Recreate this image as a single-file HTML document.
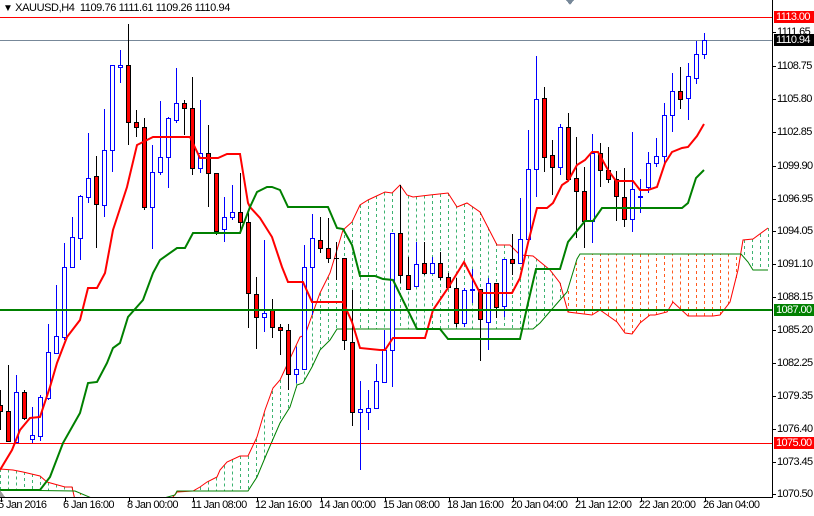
<!DOCTYPE html>
<html><head><meta charset="utf-8"><style>
html,body{margin:0;padding:0;background:#fff;}
#w{position:relative;width:814px;height:516px;overflow:hidden;background:#fff;font-family:"Liberation Sans",sans-serif;font-size:11px;color:#000;letter-spacing:-0.6px;}
.yl{position:absolute;left:777px;font-size:11px;line-height:12px;}
.xl{position:absolute;top:499px;font-size:11px;line-height:12px;white-space:nowrap;}
.tag{position:absolute;left:774px;width:40px;height:12px;line-height:12px;color:#fff;font-size:11px;padding-left:2px;box-sizing:border-box;}
</style></head><body><div id="w">
<svg id="s" width="814" height="516" style="position:absolute;left:0;top:0" shape-rendering="crispEdges"></svg>
<div style="position:absolute;left:3px;top:2px;white-space:nowrap;font-size:11px;letter-spacing:-0.4px"><span style="font-size:10px;">▼</span> XAUUSD,H4&nbsp; 1109.76 1111.61 1109.26 1110.94</div>
<div class="yl" style="top:26px">1111.65</div>
<div class="yl" style="top:60px">1108.75</div>
<div class="yl" style="top:93px">1105.80</div>
<div class="yl" style="top:126px">1102.85</div>
<div class="yl" style="top:160px">1099.90</div>
<div class="yl" style="top:193px">1096.95</div>
<div class="yl" style="top:225px">1094.05</div>
<div class="yl" style="top:258px">1091.10</div>
<div class="yl" style="top:291px">1088.15</div>
<div class="yl" style="top:324px">1085.20</div>
<div class="yl" style="top:357px">1082.25</div>
<div class="yl" style="top:390px">1079.35</div>
<div class="yl" style="top:423px">1076.40</div>
<div class="yl" style="top:456px">1073.45</div>
<div class="yl" style="top:488px">1070.50</div>
<div class="tag" style="top:11px;background:#f00">1113.00</div>
<div class="tag" style="top:34px;background:#000">1110.94</div>
<div class="tag" style="top:304px;background:#008000">1087.00</div>
<div class="tag" style="top:437px;background:#f00">1075.00</div>
<div class="xl" style="left:-2px">5 Jan 2016</div>
<div class="xl" style="left:63px">6 Jan 16:00</div>
<div class="xl" style="left:127px">8 Jan 00:00</div>
<div class="xl" style="left:191px">11 Jan 08:00</div>
<div class="xl" style="left:255px">12 Jan 16:00</div>
<div class="xl" style="left:319px">14 Jan 00:00</div>
<div class="xl" style="left:383px">15 Jan 08:00</div>
<div class="xl" style="left:447px">18 Jan 16:00</div>
<div class="xl" style="left:511px">20 Jan 04:00</div>
<div class="xl" style="left:575px">21 Jan 12:00</div>
<div class="xl" style="left:639px">22 Jan 20:00</div>
<div class="xl" style="left:703px">26 Jan 04:00</div>
</div>
<script>
var NS="http://www.w3.org/2000/svg",s=document.getElementById('s'),h='';
var A=[[0,469],[13,470],[23,472],[40,476],[47,482],[65,487],[72,487],[75,500],[170,520],[173,497],[177,492],[193,491],[200,487],[207,482],[217,477],[220,470],[227,462],[240,456],[248,456],[257,437],[265,410],[273,388],[280,380],[300,337],[305,335],[320,293],[330,273],[343,230],[352,222],[360,205],[368,200],[385,192],[392,193],[400,185],[407,195],[413,197],[430,195],[448,193],[457,207],[467,203],[480,212],[497,245],[510,245],[520,255],[533,256],[550,270],[560,283],[568,312],[592,315],[600,310],[610,317],[617,322],[625,333],[632,334],[640,323],[650,315],[655,315],[667,312],[673,302],[688,316],[713,316],[720,315],[730,302],[738,270],[743,240],[753,239],[768,228]];
var B=[[0,490],[75,491],[120,510],[175,495],[177,491],[248,491],[257,477],[267,453],[280,423],[290,407],[297,385],[303,383],[312,367],[320,350],[330,340],[337,329],[533,329],[540,323],[553,308],[567,292],[577,259],[580,254],[741,254],[748,262],[753,270],[768,270]];
function f(P,x){for(var i=0;i<P.length-1;i++){if(x>=P[i][0]&&x<=P[i+1][0]){var t=(x-P[i][0])/((P[i+1][0]-P[i][0])||1);return P[i][1]+t*(P[i+1][1]-P[i][1]);}}return null;}
function pl(P){return P.map(function(p){return p[0]+','+p[1]}).join(' ');}
h+='<g clip-path="url(#c)">';
for(var x=0;x<=768;x+=8){var a=f(A,x),b=f(B,x);if(a==null||b==null)continue;var c=a<b?'#3cb371':'#ff5a1f';h+='<line x1="'+(x+.5)+'" x2="'+(x+.5)+'" y1="'+a+'" y2="'+b+'" stroke="'+c+'" stroke-dasharray="3,3"/>';}
h+='<polyline points="'+pl(A)+'" fill="none" stroke="#f00" stroke-width="1" shape-rendering="auto"/>';
h+='<polyline points="'+pl(B)+'" fill="none" stroke="#008000" stroke-width="1" shape-rendering="auto"/>';
h+='</g>';
h+='<line x1="0" x2="772" y1="17.5" y2="17.5" stroke="#f00"/><line x1="0" x2="772" y1="443.5" y2="443.5" stroke="#f00"/><line x1="0" x2="772" y1="40.5" y2="40.5" stroke="#778899"/>';
var T=[[0,470],[12,450],[20,430],[30,418],[40,417],[50,387],[57,363],[67,337],[80,320],[88,288],[97,288],[105,273],[113,230],[127,187],[137,145],[153,137],[190,137],[200,158],[218,158],[227,154],[240,154],[248,203],[250,207],[260,218],[272,237],[282,267],[288,282],[303,282],[312,302],[343,302],[352,322],[360,348],[380,350],[385,350],[393,338],[425,338],[433,310],[448,288],[464,262],[480,293],[512,293],[520,278],[528,243],[537,208],[547,208],[553,203],[562,185],[568,181],[577,165],[585,160],[592,152],[598,152],[608,170],[616,181],[633,181],[640,190],[648,190],[657,187],[665,163],[672,152],[682,148],[688,147],[697,136],[704,124]];
var K=[[0,490],[40,490],[50,477],[63,443],[80,413],[88,383],[97,382],[107,363],[113,348],[120,343],[128,317],[143,300],[153,273],[160,260],[177,248],[185,248],[193,233],[240,233],[250,207],[257,192],[267,187],[272,187],[280,190],[288,207],[328,207],[337,228],[343,229],[352,245],[360,276],[375,276],[383,279],[393,280],[417,329],[440,329],[448,339],[520,339],[528,303],[536,269],[560,269],[568,242],[585,221],[593,221],[602,208],[682,208],[688,203],[696,178],[704,170]];
var C=[[0,'r',405,411,390,430],[1,'r',411,441,365,442],[2,'b',392,442,375,442],[3,'r',392,418,390,420],[4,'b',435,439,407,443],[5,'b',397,436,395,441],[6,'b',352,398,324,400],[7,'b',336,353,285,353],[8,'b',267,337,243,340],[9,'b',237,267,217,268],[10,'b',196,238,195,260],[11,'b',178,197,133,203],[12,'r',176,204,156,248],[13,'b',150,205,109,217],[14,'b',65,150,65,172],[15,'b',65,67,50,83],[16,'r',65,122,24,145],[17,'r',122,127,110,137],[18,'r',127,207,118,210],[19,'b',172,207,145,249],[20,'b',157,172,101,175],[21,'b',118,157,117,188],[22,'b',103,120,68,123],[23,'r',103,108,100,135],[24,'r',108,168,77,175],[25,'b',153,168,100,173],[26,'r',153,173,125,207],[27,'r',173,231,173,235],[28,'b',217,229,197,242],[29,'b',212,217,185,220],[30,'r',212,222,173,233],[31,'r',222,293,213,328],[32,'r',294,317,277,349],[33,'b',313,317,240,332],[34,'r',310,327,299,338],[35,'r',327,330,324,355],[36,'r',330,374,324,390],[37,'b',369,374,347,383],[38,'b',267,369,245,370],[39,'b',238,267,214,315],[40,'r',240,248,217,253],[41,'r',248,258,218,263],[42,'x',258,258,242,280],[43,'r',258,340,258,350],[44,'r',342,412,290,426],[45,'b',409,412,381,470],[46,'b',408,412,390,430],[47,'b',381,408,364,408],[48,'b',350,382,330,382],[49,'b',233,350,233,387],[50,'r',233,275,185,283],[51,'r',275,289,257,290],[52,'b',264,286,242,287],[53,'r',263,273,242,275],[54,'b',263,273,257,274],[55,'r',263,277,252,280],[56,'r',277,287,273,288],[57,'r',288,323,278,327],[58,'b',290,323,288,327],[59,'b',289,290,269,303],[60,'r',289,319,289,361],[61,'b',283,322,278,350],[62,'r',283,307,283,318],[63,'b',259,306,259,317],[64,'r',259,263,234,275],[65,'b',239,263,198,263],[66,'b',169,239,130,243],[67,'b',99,169,56,197],[68,'r',98,157,87,172],[69,'r',155,167,140,195],[70,'b',127,167,124,175],[71,'r',127,179,113,179],[72,'r',178,191,137,238],[73,'r',191,221,167,248],[74,'b',153,221,134,243],[75,'r',153,170,143,187],[76,'r',170,179,147,183],[77,'r',179,196,171,221],[78,'r',197,219,168,227],[79,'b',189,219,132,232],[80,'b',196,197,179,213],[81,'b',163,187,152,193],[82,'b',156,163,138,167],[83,'b',115,156,103,163],[84,'b',91,115,73,132],[85,'r',91,99,67,109],[86,'b',76,98,63,120],[87,'b',54,78,41,84],[88,'b',40,54,33,59]];
C.forEach(function(c){var x=c[0]*8,col=c[1]=='b'?'#00f':'#000';
h+='<line x1="'+(x+.5)+'" x2="'+(x+.5)+'" y1="'+c[4]+'" y2="'+c[5]+'" stroke="'+col+'"/>';
if(c[1]=='x'){h+='<line x1="'+(x-2)+'" x2="'+(x+3)+'" y1="'+(c[2]+.5)+'" y2="'+(c[2]+.5)+'" stroke="#000"/>';return;}
h+='<rect x="'+(x-1.5)+'" y="'+(c[2]+.5)+'" width="4" height="'+Math.max(1,c[3]-c[2])+'" fill="'+(c[1]=='b'?'#fff':'#f00')+'" stroke="'+col+'"/>';});
h+='<polyline points="'+pl(T)+'" fill="none" stroke="#f00" stroke-width="2" shape-rendering="auto"/>';
h+='<polyline points="'+pl(K)+'" fill="none" stroke="#008000" stroke-width="2" shape-rendering="auto"/>';
h+='<line x1="0" x2="772" y1="310" y2="310" stroke="#008000" stroke-width="2"/>';
h+='<polygon points="566,0 574,0 570,5" fill="#778899"/><polygon points="0,490 0,497 5,497" fill="#999"/>';
h+='<line x1="772.5" x2="772.5" y1="0" y2="497" stroke="#000"/><line x1="0" x2="773" y1="497.5" y2="497.5" stroke="#000"/>';
var ys=[32,66,99,132,166,199,231,264,297,330,363,396,429,462,494];ys.forEach(function(y){h+='<line x1="772" x2="776" y1="'+(y+.5)+'" y2="'+(y+.5)+'" stroke="#000"/>';});
for(var i=0;i<12;i++){var x=i*64+1;h+='<line x1="'+(x+.5)+'" x2="'+(x+.5)+'" y1="497" y2="502" stroke="#000"/>';}
s.innerHTML='<defs><clipPath id="c"><rect x="0" y="0" width="772" height="497"/></clipPath></defs>'+h;
</script>
</body></html>
